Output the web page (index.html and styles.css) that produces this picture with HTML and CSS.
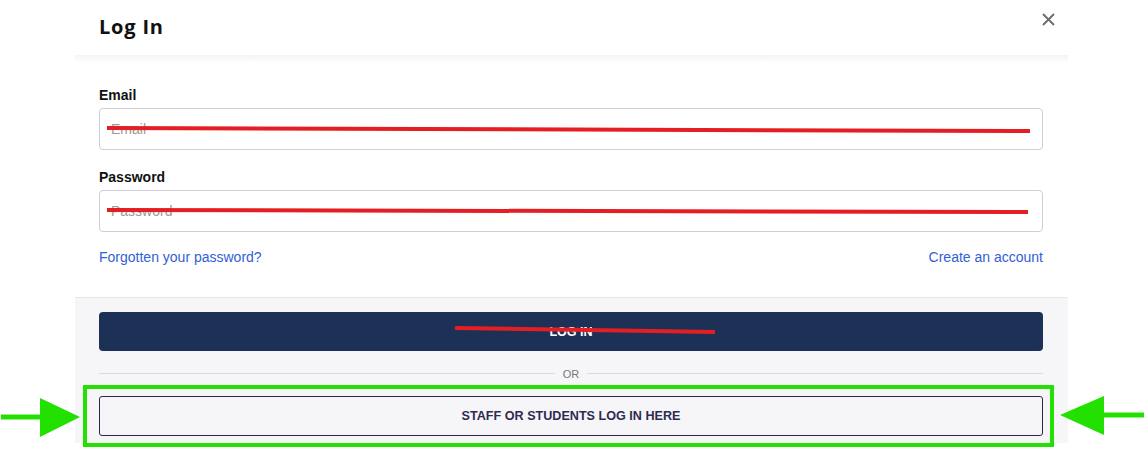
FILE: index.html
```html
<!DOCTYPE html>
<html lang="en">
<head>
<meta charset="utf-8">
<title>Log In</title>
<link rel="stylesheet" href="styles.css">
</head>
<body>
<div class="modal">
  <header class="modal-header">
    <h1 class="title">Log In</h1>
    <button class="close" aria-label="Close">
      <svg width="13" height="13" viewBox="0 0 13 13"><path d="M1 1L12 12M12 1L1 12" stroke="#6b6b6b" stroke-width="1.8" fill="none"/></svg>
    </button>
  </header>
  <div class="modal-body">
    <label class="label">Email</label>
    <input class="field" type="text" placeholder="Email">
    <label class="label label-pw">Password</label>
    <input class="field" type="password" placeholder="Password">
    <div class="links">
      <a class="link" href="#">Forgotten your password?</a>
      <a class="link" href="#">Create an account</a>
    </div>
  </div>
  <div class="modal-footer">
    <button class="btn-primary">LOG IN</button>
    <div class="divider"><span class="line"></span><span class="or">OR</span><span class="line"></span></div>
    <button class="btn-outline">STAFF OR STUDENTS LOG IN HERE</button>
  </div>
</div>
<svg class="annot" width="1145" height="449" viewBox="0 0 1145 449">
  <line x1="107" y1="128" x2="1030" y2="131" stroke="#e41e22" stroke-width="4"/>
  <line x1="107" y1="210" x2="1028" y2="212" stroke="#e41e22" stroke-width="4"/>
  <line x1="455" y1="328" x2="715" y2="332" stroke="#e41e22" stroke-width="4"/>
  <rect x="85" y="387" width="967" height="58" fill="none" stroke="#22e000" stroke-width="4"/>
  <line x1="1" y1="417" x2="44" y2="417" stroke="#22e000" stroke-width="5"/>
  <polygon points="40,398 80,417 40,437" fill="#22e000"/>
  <line x1="1144" y1="415" x2="1100" y2="415" stroke="#22e000" stroke-width="5"/>
  <polygon points="1104,396 1060,415 1104,435" fill="#22e000"/>
</svg>
</body>
</html>
```

FILE: styles.css
```css
* { box-sizing: border-box; }
html, body { margin: 0; padding: 0; background: #fff; }
body {
  font-family: "Liberation Sans", Arial, sans-serif;
  width: 1145px;
  height: 449px;
  overflow: hidden;
  position: relative;
}
.modal {
  margin-left: 75px;
  width: 993px;
  background: #fff;
  display: flex;
  flex-direction: column;
}
.modal-header {
  height: 55px;
  display: flex;
  align-items: center;
  justify-content: space-between;
  padding: 0 13px 0 24px;
  position: relative;
  z-index: 1;
}
.modal-header::after {
  content: "";
  position: absolute;
  left: 0;
  right: 0;
  top: 55px;
  height: 8px;
  background: linear-gradient(rgba(0,0,0,0.045), rgba(0,0,0,0));
}
.title {
  margin: 0;
  font-family: "Open Sans", sans-serif;
  font-weight: 700;
  font-size: 20px;
  letter-spacing: 0.8px;
  color: #111;
  padding-bottom: 2px;
}
.close {
  border: 0;
  background: none;
  padding: 0;
  width: 13px;
  height: 13px;
  margin-bottom: 16px;
  display: flex;
}
.modal-body {
  padding: 32px 25px 0 24px;
  display: flex;
  flex-direction: column;
  height: 242px;
}
.label {
  font-size: 14px;
  font-weight: 700;
  color: #111;
  line-height: 16px;
  margin-bottom: 5px;
}
.label-pw { margin-top: 19px; }
.field {
  height: 42px;
  border: 1px solid #cfcdda;
  border-radius: 4px;
  padding: 0 11px;
  font-family: "Liberation Sans", Arial, sans-serif;
  font-size: 14px;
  color: #333;
  background: #fff;
}
.field::placeholder { color: #999; }
.links {
  display: flex;
  justify-content: space-between;
  margin-top: 17px;
}
.link {
  color: #3160d8;
  font-size: 14px;
  text-decoration: none;
  line-height: 16px;
}
.modal-footer {
  background: #f6f6f9;
  border-top: 1px solid #e6e6ec;
  padding: 14px 25px 7px 24px;
  display: flex;
  flex-direction: column;
}
.btn-primary {
  height: 39px;
  background: #1d3157;
  border: 0;
  border-radius: 4px;
  color: #fff;
  font-family: "Liberation Sans", Arial, sans-serif;
  font-weight: 700;
  font-size: 12.5px;
}
.divider {
  display: flex;
  align-items: center;
  gap: 8px;
  height: 45px;
}
.line { flex: 1; height: 1px; background: #dcdce0; }
.or { font-size: 11px; color: #777; }
.btn-outline {
  height: 40px;
  background: transparent;
  border: 1px solid #2b2548;
  border-radius: 3px;
  color: #2f2a4f;
  font-family: "Liberation Sans", Arial, sans-serif;
  font-weight: 700;
  font-size: 12.6px;
}
.annot {
  position: absolute;
  left: 0;
  top: 0;
  pointer-events: none;
}
```
